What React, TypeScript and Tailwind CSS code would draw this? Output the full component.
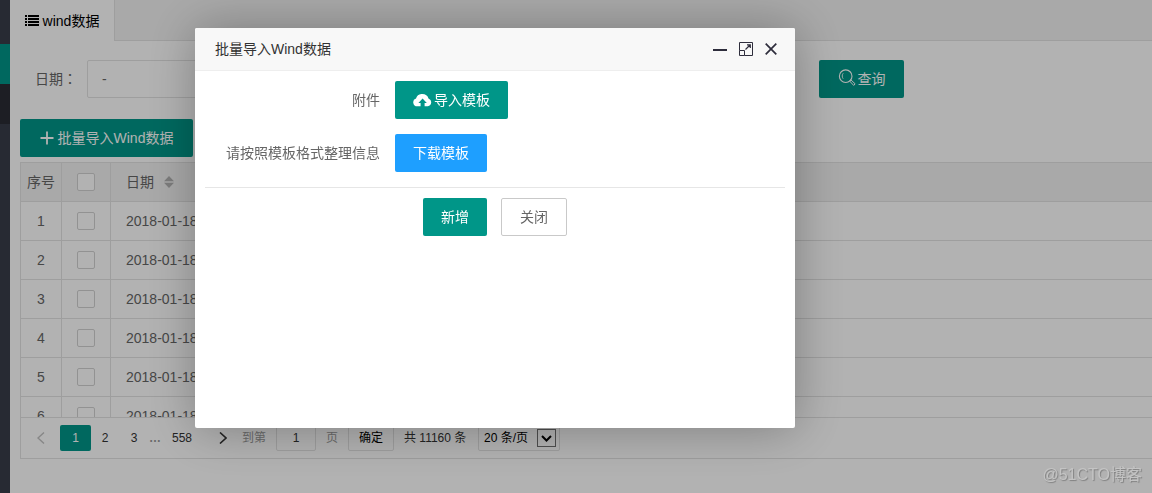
import React from "react";

const rows = [1, 2, 3, 4, 5, 6].map((id) => ({ id, date: "2018-01-18" }));

const solidButton =
  "flex h-[38px] items-center justify-center rounded-xs text-sm whitespace-nowrap text-white";

const cell = "border-r border-b border-[#e2e2e2]";

function ListIcon() {
  return (
    <svg viewBox="0 0 14 12" className="h-3 w-3.5" fill="currentColor" aria-hidden="true">
      <path d="M0 0h2v2H0zM3 0h11v2H3zM0 3h2v2H0zM3 3h11v2H3zM0 6h2v2H0zM3 6h11v2H3zM0 9h2v2H0zM3 9h11v2H3z" />
    </svg>
  );
}

function PlusIcon() {
  return (
    <svg viewBox="0 0 14 14" className="size-3.5" stroke="currentColor" strokeWidth="1.8" aria-hidden="true">
      <path d="M7 .5v13M.5 7h13" />
    </svg>
  );
}

function SearchIcon() {
  return (
    <svg viewBox="0 0 18 18" className="mb-0.5 size-[18px]" fill="none" stroke="currentColor" aria-hidden="true">
      <circle cx="7.7" cy="7.2" r="6.3" strokeWidth="1.1" />
      <path d="M5.2 4.3c-1.200 1.600-1.300 3.600-.1 5.400" strokeWidth=".9" />
      <path d="m11.600 12 1.200-1.200 4.300 4-1.400 1.600z" strokeWidth="1" />
    </svg>
  );
}

function CloudIcon() {
  return (
    <svg viewBox="0 0 19 13" className="h-[13px] w-[19px]" fill="currentColor" aria-hidden="true">
      <path d="M7.6 12.3H4.3A4 4 0 0 1 3 4.5 6.3 6.3 0 0 1 9.4 0c3 0 5.4 1.8 6.1 4.4a4.1 4.1 0 0 1-.7 7.9h-3.2V9h2.2L9.6 4.6 5.4 9h2.2z" />
    </svg>
  );
}

function ExpandIcon() {
  return (
    <svg viewBox="0 0 14 14" className="size-3.5" fill="none" stroke="currentColor" aria-hidden="true">
      <path d="M.5 8.500v-8h13v13h-8" />
      <path d="M.5 8.500h5v5h-5z" />
      <path d="m6.500 7.500 4.500-4.500M8 2.800h3.300V6" strokeWidth="1.2" />
    </svg>
  );
}

function CheckBox({ label }: { label: string }) {
  return (
    <input
      type="checkbox"
      aria-label={label}
      className="mx-auto block size-[18px] appearance-none rounded-xs border border-[#d2d2d2] bg-white"
    />
  );
}

function Sidebar() {
  return (
    <nav className="flex w-2.5 shrink-0 flex-col bg-[#393d49] pt-11">
      <div className="h-10 bg-[#009688]" />
      <div className="h-10 bg-[#2a2c34]" />
    </nav>
  );
}

function DataTable() {
  return (
    <div className="h-[254px] overflow-hidden">
      <table className="w-full table-fixed border-separate border-spacing-0 text-sm leading-7">
        <colgroup>
          <col className="w-[41px]" />
          <col className="w-[49px]" />
          <col className="w-[200px]" />
          <col />
        </colgroup>
        <thead>
          <tr className="h-[39px] bg-[#f2f2f2]">
            <th className={`${cell} font-normal whitespace-nowrap`}>序号</th>
            <th className={cell}>
              <CheckBox label="全选" />
            </th>
            <th className={`${cell} px-[15px] font-normal`}>
              <div className="flex items-center gap-2.5">
                日期
                <svg viewBox="0 0 10 12" className="h-3 w-2.5" fill="#b2b2b2" aria-hidden="true">
                  <path d="M0 5.3 5 0l5 5.3zM0 6.700h10L5 12z" />
                </svg>
              </div>
            </th>
            <th className="border-b border-[#e2e2e2]" />
          </tr>
        </thead>
        <tbody>
          {rows.map((row) => (
            <tr key={row.id} className="h-[39px]">
              <td className={`${cell} text-center`}>{row.id}</td>
              <td className={cell}>
                <CheckBox label={`选择第${row.id}行`} />
              </td>
              <td className={`${cell} px-[15px]`}>{row.date}</td>
              <td className="border-b border-[#e2e2e2]" />
            </tr>
          ))}
        </tbody>
      </table>
    </div>
  );
}

function Pagination() {
  return (
    <div className="flex h-[41px] items-center border-t border-[#e2e2e2] text-xs text-[#333]">
      <button aria-label="上一页" className="flex w-[39px] justify-center text-[#c2c2c2]">
        <svg viewBox="0 0 8 12" className="h-3 w-2" fill="none" stroke="currentColor" strokeWidth="1.4">
          <path d="M7 .5 1 6l6 5.5" />
        </svg>
      </button>
      <button className="h-[26px] w-[31px] rounded-xs bg-[#009688] text-white">1</button>
      <button className="w-7">2</button>
      <button className="w-[30px]">3</button>
      <span className="w-3 text-center font-bold text-[#999]">…</span>
      <button className="w-[42px]">558</button>
      <button aria-label="下一页" className="flex w-[39px] justify-center">
        <svg viewBox="0 0 8 12" className="h-3 w-2" fill="none" stroke="currentColor" strokeWidth="1.6">
          <path d="m1 .5 6 5.5-6 5.5" />
        </svg>
      </button>
      <div className="flex items-center gap-2.5">
        <label htmlFor="page" className="text-[#999]">
          到第
        </label>
        <input
          id="page"
          defaultValue="1"
          className="h-[26px] w-10 rounded-xs border border-[#e2e2e2] bg-white text-center"
        />
        <span className="text-[#999]">页</span>
        <button className="h-[26px] w-[46px] rounded-xs border border-[#e2e2e2] text-black">确定</button>
        <span className="w-16 whitespace-nowrap">共 11160 条</span>
        <div className="relative">
          <select
            aria-label="每页条数"
            className="block h-[26px] w-[82px] appearance-none rounded-xs border border-[#e2e2e2] bg-white pl-[5px] text-black"
          >
            <option>20 条/页</option>
            <option>50 条/页</option>
          </select>
          <span className="pointer-events-none absolute top-1 right-1 flex h-[18px] w-[19px] items-center justify-center border border-[#707070]">
            <svg viewBox="0 0 11 7" className="h-[7px] w-[11px]" fill="none" stroke="#000" strokeWidth="2">
              <path d="m1 1 4.500 4.500L10 1" />
            </svg>
          </span>
        </div>
      </div>
    </div>
  );
}

function ImportDialog() {
  return (
    <div
      role="dialog"
      aria-labelledby="dialog-title"
      className="h-[400px] w-[600px] max-w-full rounded-xs bg-white shadow-[1px_1px_50px_rgba(0,0,0,0.3)]"
    >
      <header className="flex h-[43px] items-center justify-between rounded-t-xs border-b border-[#eee] bg-[#f8f8f8] pr-[18px] pl-5 text-[#333]">
        <h2 id="dialog-title" className="text-sm">
          批量导入Wind数据
        </h2>
        <div className="flex items-center gap-3 text-[#2e2d3c]">
          <button aria-label="最小化">
            <svg viewBox="0 0 14 14" className="size-3.5" fill="currentColor">
              <path d="M0 7h14v2H0z" />
            </svg>
          </button>
          <button aria-label="最大化">
            <ExpandIcon />
          </button>
          <button aria-label="关闭窗口">
            <svg viewBox="0 0 12 14" className="h-3.5 w-3" stroke="currentColor" strokeWidth="1.7">
              <path d="m.7 1.700 10.600 10.600M11.300 1.700.7 12.300" />
            </svg>
          </button>
        </div>
      </header>
      <form className="p-2.5" onSubmit={(event) => event.preventDefault()}>
        <div className="mb-[15px] flex items-center gap-[15px]">
          <label htmlFor="import" className="w-[175px] text-right">
            附件
          </label>
          <button id="import" type="button" className={`${solidButton} w-[113px] gap-0.5 bg-[#009688]`}>
            <CloudIcon />
            导入模板
          </button>
        </div>
        <div className="flex items-center gap-[15px]">
          <label htmlFor="download" className="w-[175px] text-right">
            请按照模板格式整理信息
          </label>
          <button id="download" type="button" className={`${solidButton} w-[92px] bg-[#1e9fff]`}>
            下载模板
          </button>
        </div>
        <hr className="mt-[15px] mb-2.5 border-[#e6e6e6]" />
        <div className="flex justify-center gap-3.5">
          <button type="submit" className={`${solidButton} w-16 bg-[#009688]`}>
            新增
          </button>
          <button type="button" className="h-[38px] w-[66px] rounded-xs border border-[#c9c9c9] bg-white">
            关闭
          </button>
        </div>
      </form>
    </div>
  );
}

export default function App() {
  return (
    <div className="flex min-h-screen bg-white font-['Liberation_Sans','Noto_Sans_CJK_SC',sans-serif] text-sm text-[#666]">
      <Sidebar />
      <main className="min-w-0 flex-1">
        <div className="flex h-[41px] border-b border-[#e2e2e2] bg-[#f2f2f2]">
          <a
            href="#wind"
            className="-mb-px flex w-[105px] items-center justify-center gap-1 border-r border-[#e2e2e2] bg-white text-black"
          >
            <ListIcon />
            wind数据
          </a>
        </div>
        <div className="pt-[19px] pl-2.5">
          <div className="flex items-center pl-[15px]">
            <label
              htmlFor="date"
              lang="zh-Hant"
              className="w-[52px] font-['Liberation_Sans','Noto_Sans_CJK_TC',sans-serif]"
            >
              日期：
            </label>
            <input
              id="date"
              defaultValue="-"
              className="h-[38px] w-[190px] rounded-xs border border-[#e2e2e2] bg-white px-3.5"
            />
            <button className={`${solidButton} ml-[542px] w-[85px] shrink-0 gap-0.5 bg-[#009688]`}>
              <SearchIcon />
              查询
            </button>
          </div>
          <button className={`${solidButton} mt-[21px] mb-[5px] w-[173px] gap-1 bg-[#009688]`}>
            <PlusIcon />
            批量导入Wind数据
          </button>
          <section className="border-y border-l border-[#e2e2e2]">
            <DataTable />
            <Pagination />
          </section>
        </div>
      </main>
      <div className="fixed inset-0 bg-black/30 pt-7 pl-[195px]">
        <ImportDialog />
      </div>
      <div className="fixed right-2.5 bottom-2 text-base leading-5 text-[#c4c4c4] [text-shadow:1px_1px_1px_#808080]">
        @51CTO博客
      </div>
    </div>
  );
}
